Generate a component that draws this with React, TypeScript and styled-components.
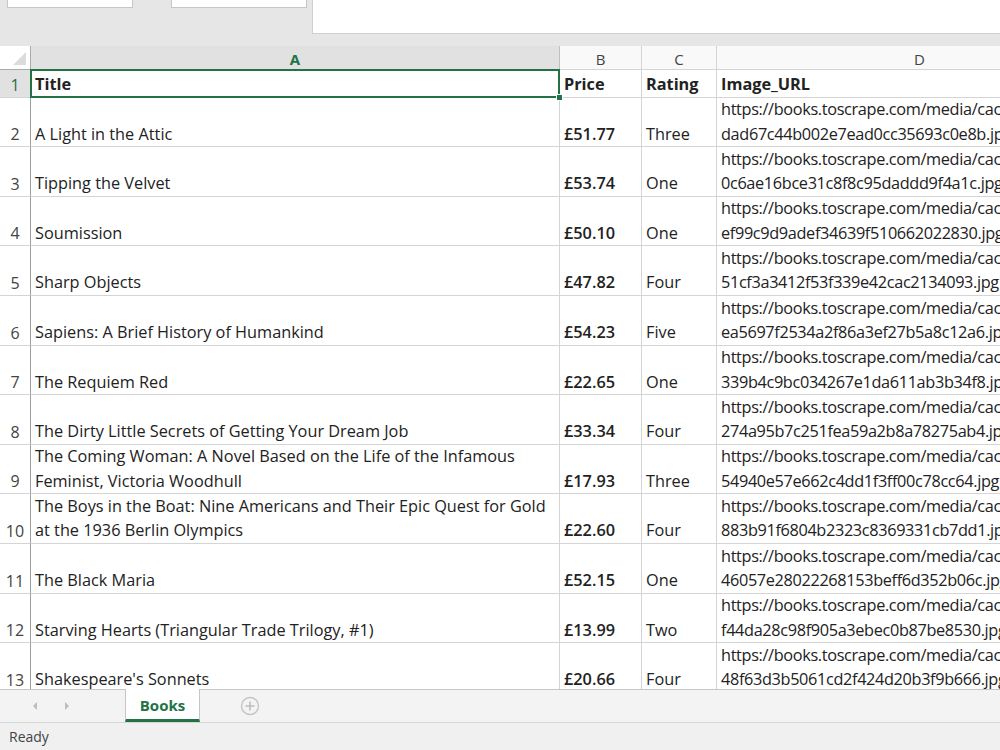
import React from 'react'
import styled, { createGlobalStyle } from 'styled-components'

const GREEN = '#217346'
const GRID = '#d4d4d4'
const COLS = '31px 529px 82px 75px 406px'
const FONT = `'Open Sans', 'Lato', 'Liberation Sans', sans-serif`

type Book = {
  title: string[]
  price: string
  rating: string
  url: string[]
}

const books: Book[] = [
  { title: ['A Light in the Attic'], price: '£51.77', rating: 'Three', url: ['https://books.toscrape.com/media/cache/2c/da/2c', 'dad67c44b002e7ead0cc35693c0e8b.jpg'] },
  { title: ['Tipping the Velvet'], price: '£53.74', rating: 'One', url: ['https://books.toscrape.com/media/cache/26/0c/26', '0c6ae16bce31c8f8c95daddd9f4a1c.jpg'] },
  { title: ['Soumission'], price: '£50.10', rating: 'One', url: ['https://books.toscrape.com/media/cache/3e/ef/3e', 'ef99c9d9adef34639f510662022830.jpg'] },
  { title: ['Sharp Objects'], price: '£47.82', rating: 'Four', url: ['https://books.toscrape.com/media/cache/32/51/32', '51cf3a3412f53f339e42cac2134093.jpg'] },
  { title: ['Sapiens: A Brief History of Humankind'], price: '£54.23', rating: 'Five', url: ['https://books.toscrape.com/media/cache/be/a5/be', 'ea5697f2534a2f86a3ef27b5a8c12a6.jpg'] },
  { title: ['The Requiem Red'], price: '£22.65', rating: 'One', url: ['https://books.toscrape.com/media/cache/68/33/68', '339b4c9bc034267e1da611ab3b34f8.jpg'] },
  { title: ['The Dirty Little Secrets of Getting Your Dream Job'], price: '£33.34', rating: 'Four', url: ['https://books.toscrape.com/media/cache/92/27/92', '274a95b7c251fea59a2b8a78275ab4.jpg'] },
  {
    title: ['The Coming Woman: A Novel Based on the Life of the Infamous', 'Feminist, Victoria Woodhull'],
    price: '£17.93',
    rating: 'Three',
    url: ['https://books.toscrape.com/media/cache/3d/54/3d', '54940e57e662c4dd1f3ff00c78cc64.jpg'],
  },
  {
    title: ['The Boys in the Boat: Nine Americans and Their Epic Quest for Gold', 'at the 1936 Berlin Olympics'],
    price: '£22.60',
    rating: 'Four',
    url: ['https://books.toscrape.com/media/cache/66/88/66', '883b91f6804b2323c8369331cb7dd1.jpg'],
  },
  { title: ['The Black Maria'], price: '£52.15', rating: 'One', url: ['https://books.toscrape.com/media/cache/58/46/58', '46057e28022268153beff6d352b06c.jpg'] },
  { title: ['Starving Hearts (Triangular Trade Trilogy, #1)'], price: '£13.99', rating: 'Two', url: ['https://books.toscrape.com/media/cache/be/f4/be', 'f44da28c98f905a3ebec0b87be8530.jpg'] },
  { title: ["Shakespeare's Sonnets"], price: '£20.66', rating: 'Four', url: ['https://books.toscrape.com/media/cache/10/48/10', '48f63d3b5061cd2f424d20b3f9b666.jpg'] },
]

const GlobalStyle = createGlobalStyle`
  html, body {
    margin: 0;
    padding: 0;
    background: #fff;
  }
  body {
    font-family: ${FONT};
    overflow: hidden;
  }
`

const Window = styled.div`
  width: 1000px;
  height: 750px;
  display: flex;
  flex-direction: column;
  overflow: hidden;
`

const Ribbon = styled.div`
  height: 46px;
  flex: none;
  display: flex;
  align-items: flex-start;
  background: #e6e6e6;
`

const RibbonBox = styled.div<{ $left: number; $width: number }>`
  margin-left: ${(p) => p.$left}px;
  width: ${(p) => p.$width}px;
  height: 8px;
  background: #fff;
  border: 1px solid #c6c6c6;
  border-top: none;
  box-sizing: border-box;
`

const RibbonPanel = styled.div`
  margin-left: 5px;
  flex: 1;
  height: 34px;
  background: #fff;
  border-left: 1px solid #cfcfcf;
  border-bottom: 1px solid #cfcfcf;
  box-sizing: border-box;
`

const Sheet = styled.div`
  flex: 1;
  overflow: hidden;
  background: #fff;
`

const Row = styled.div<{ $h: number }>`
  display: grid;
  grid-template-columns: ${COLS};
  height: ${(p) => p.$h}px;
`

const Corner = styled.div`
  position: relative;
  background: #fff;
  border-right: 1px solid #ababab;
  border-bottom: 1px solid #ababab;
  box-sizing: border-box;

  &::after {
    content: '';
    position: absolute;
    right: 4px;
    bottom: 4px;
    border-style: solid;
    border-width: 0 0 13px 13px;
    border-color: transparent transparent #dcdcdc transparent;
  }
`

const ColHead = styled.div<{ $selected?: boolean }>`
  display: flex;
  align-items: center;
  justify-content: center;
  font-size: 15px;
  font-weight: ${(p) => (p.$selected ? 700 : 400)};
  color: ${(p) => (p.$selected ? GREEN : '#444')};
  background: ${(p) => (p.$selected ? '#e1e1e1' : '#f9f9f9')};
  border-right: 1px solid ${(p) => (p.$selected ? '#c0c0c0' : GRID)};
  border-bottom: 1px solid ${(p) => (p.$selected ? '#ababab' : GRID)};
  box-sizing: border-box;
  padding-top: 2px;
`

const RowHead = styled.div<{ $selected?: boolean }>`
  display: flex;
  align-items: flex-end;
  justify-content: center;
  line-height: 24px;
  font-size: 16px;
  color: ${(p) => (p.$selected ? GREEN : '#444')};
  background: ${(p) => (p.$selected ? '#e1e1e1' : '#fff')};
  border-right: 1px solid #9f9f9f;
  border-bottom: 1px solid ${GRID};
  box-sizing: border-box;
`

const Cell = styled.div<{ $bold?: boolean; $strong?: boolean; $tight?: boolean }>`
  display: flex;
  flex-direction: column;
  justify-content: flex-end;
  padding: 0 2px 0 4px;
  line-height: 24.5px;
  font-size: 16.3px;
  letter-spacing: ${(p) => (p.$tight ? '-0.35px' : '0')};
  font-weight: ${(p) => (p.$bold ? 700 : p.$strong ? 600 : 400)};
  color: #222;
  white-space: nowrap;
  overflow: hidden;
  border-right: 1px solid ${GRID};
  border-bottom: 1px solid ${GRID};
  box-sizing: border-box;
`

const ActiveCell = styled(Cell)`
  position: relative;
  overflow: visible;

  &::before {
    content: '';
    position: absolute;
    top: -1px;
    left: -1px;
    right: -1px;
    bottom: -1px;
    border: 2px solid ${GREEN};
    pointer-events: none;
  }

  &::after {
    content: '';
    position: absolute;
    right: -4px;
    bottom: -4px;
    width: 5px;
    height: 5px;
    background: ${GREEN};
    border: 1px solid #fff;
  }
`

const TabBar = styled.div`
  height: 33px;
  flex: none;
  display: flex;
  align-items: stretch;
  background: #f3f3f3;
  border-top: 1px solid #c6c6c6;
  box-sizing: border-box;
`

const NavArrows = styled.div`
  width: 125px;
  display: flex;
  align-items: center;
  gap: 28px;
  padding-left: 33px;
  box-sizing: border-box;
`

const Arrow = styled.span<{ $dir: 'left' | 'right' }>`
  width: 0;
  height: 0;
  border-top: 4px solid transparent;
  border-bottom: 4px solid transparent;
  ${(p) =>
    p.$dir === 'left'
      ? 'border-right: 4px solid #bdbdbd;'
      : 'border-left: 4px solid #bdbdbd;'}
`

const SheetTab = styled.div`
  width: 75px;
  margin-top: -1px;
  display: flex;
  align-items: center;
  justify-content: center;
  background: #fff;
  border-left: 1px solid #c6c6c6;
  border-right: 1px solid #c6c6c6;
  border-bottom: 3px solid ${GREEN};
  box-sizing: border-box;
  font-size: 15px;
  font-weight: 700;
  color: ${GREEN};
  padding-top: 1px;
`

const AddSheet = styled.div`
  margin-left: 40px;
  display: flex;
  align-items: center;
`

const StatusBar = styled.div`
  height: 28px;
  flex: none;
  display: flex;
  align-items: center;
  padding-left: 9px;
  background: #f0f0f0;
  border-top: 1px solid #d6d6d6;
  box-sizing: border-box;
  font-size: 14px;
  color: #444;
`

const PlusIcon = () => (
  <svg width="20" height="20" viewBox="0 0 20 20">
    <circle cx="10" cy="10" r="8.5" fill="none" stroke="#c4c4c4" strokeWidth="1.4" />
    <path d="M10 5.5v9M5.5 10h9" stroke="#bdbdbd" strokeWidth="1.6" />
  </svg>
)

const App = () => {
  return (
    <Window>
      <GlobalStyle />
      <Ribbon>
        <RibbonBox $left={7} $width={126} />
        <RibbonBox $left={38} $width={136} />
        <RibbonPanel />
      </Ribbon>

      <Sheet>
        <Row $h={24}>
          <Corner />
          <ColHead $selected>A</ColHead>
          <ColHead>B</ColHead>
          <ColHead>C</ColHead>
          <ColHead>D</ColHead>
        </Row>

        <Row $h={27.6}>
          <RowHead $selected>1</RowHead>
          <ActiveCell $bold>Title</ActiveCell>
          <Cell $bold>Price</Cell>
          <Cell $bold>Rating</Cell>
          <Cell $bold>Image_URL</Cell>
        </Row>

        {books.map((book, i) => (
          <Row key={i} $h={49.6}>
            <RowHead>{i + 2}</RowHead>
            <Cell>
              {book.title.map((line) => (
                <div key={line}>{line}</div>
              ))}
            </Cell>
            <Cell $strong>{book.price}</Cell>
            <Cell>{book.rating}</Cell>
            <Cell $tight>
              {book.url.map((line) => (
                <div key={line}>{line}</div>
              ))}
            </Cell>
          </Row>
        ))}
      </Sheet>

      <TabBar>
        <NavArrows>
          <Arrow $dir="left" />
          <Arrow $dir="right" />
        </NavArrows>
        <SheetTab>Books</SheetTab>
        <AddSheet>
          <PlusIcon />
        </AddSheet>
      </TabBar>
      <StatusBar>Ready</StatusBar>
    </Window>
  )
}

export default App
